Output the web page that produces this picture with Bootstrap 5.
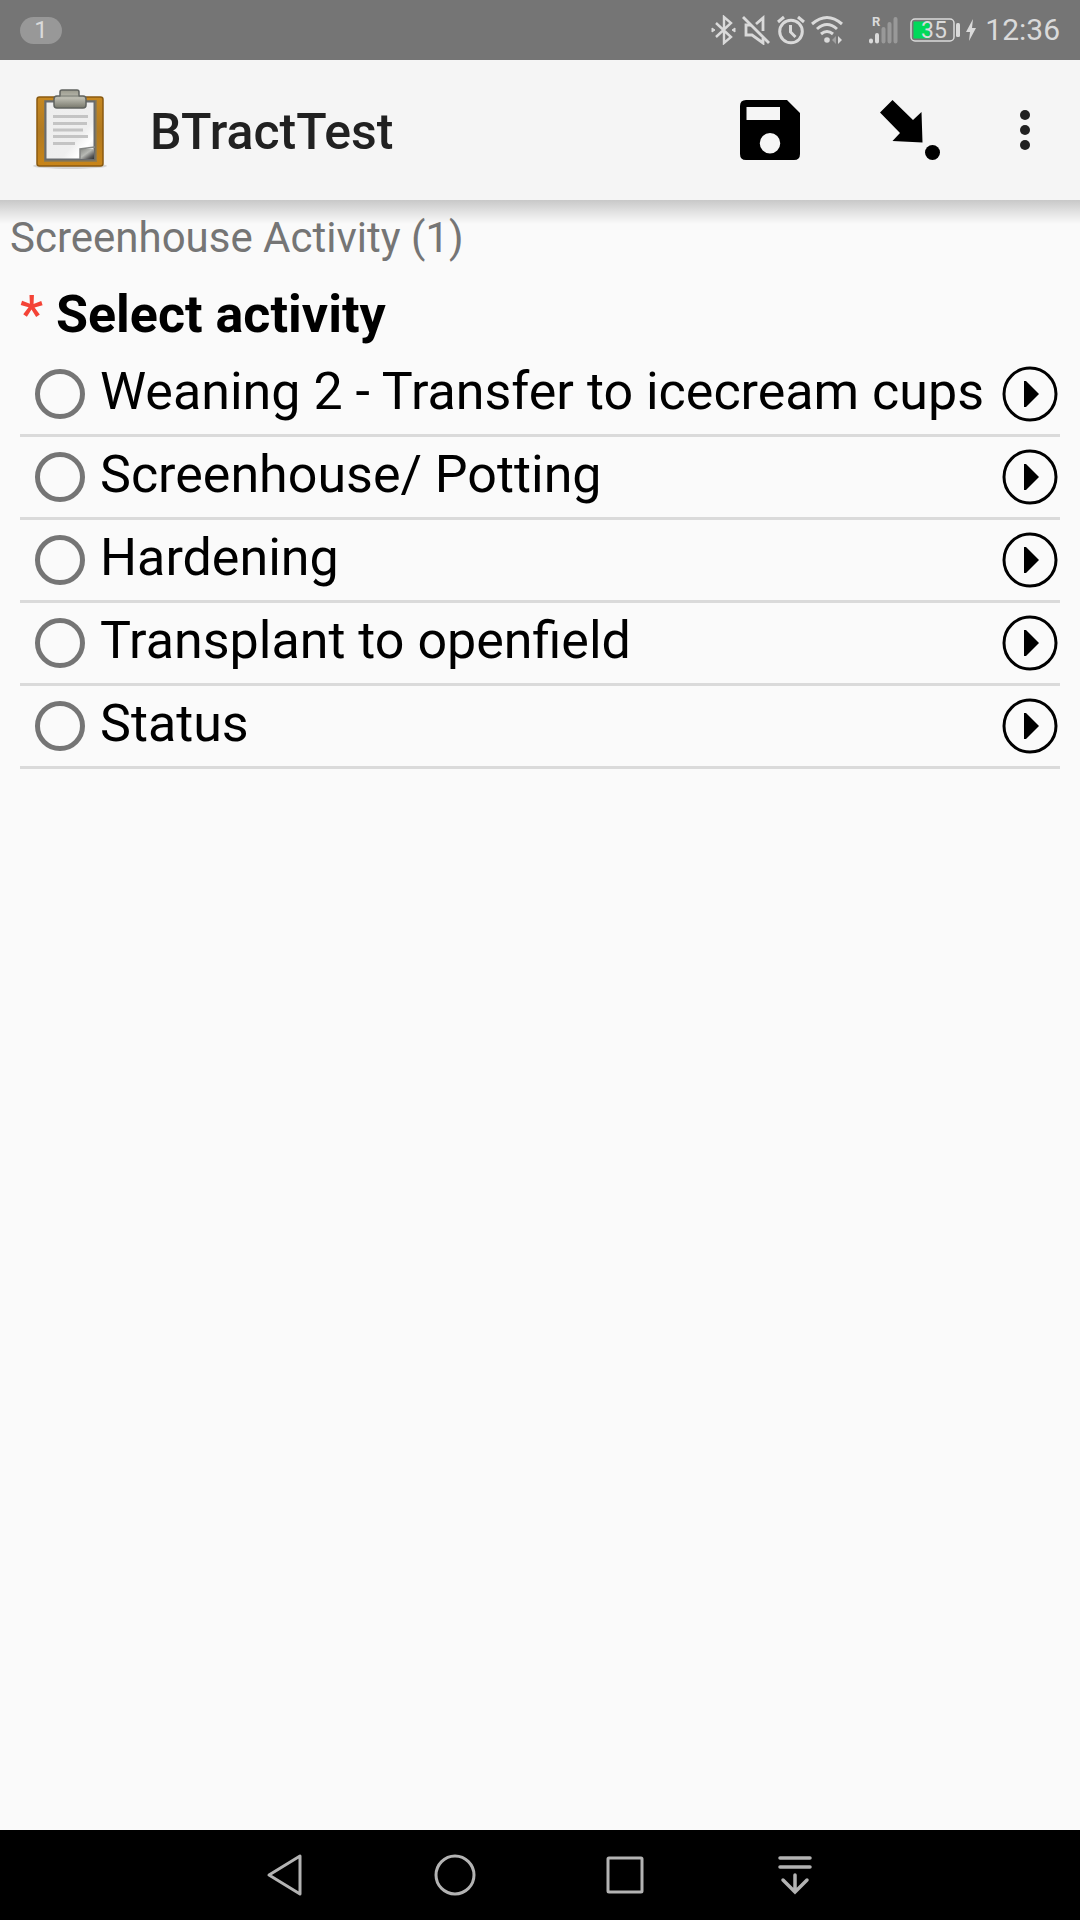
<!DOCTYPE html>
<html lang="en">
<head>
<meta charset="utf-8">
<meta name="viewport" content="width=device-width, initial-scale=1">
<title>BTractTest</title>
<link href="https://cdn.jsdelivr.net/npm/bootstrap@5.3.0/dist/css/bootstrap.min.css" rel="stylesheet">
<style>
  body { background: #fafafa; color: #000; font-family: Roboto, "Noto Sans", sans-serif; }
  svg { display: block; flex: none; }
  .status-bar { background: #757575; color: #dadada; height: 60px; padding: 0 20px; font-size: 30px; line-height: 60px; }
  .count-pill { background: #989898; width: 42px; height: 27px; font-size: 24px; line-height: 27px; }
  .app-bar { background: #f5f5f5; height: 140px; padding: 0 20px 0 30px; }
  .app-title { color: #212121; font-size: 50px; line-height: 60px; font-weight: 500; padding: 4px 0 0 40px; }
  .icon-btn { border: 0; padding: 0; background: none; color: inherit; }
  .app-actions { gap: 80px; }
  .form-area { background: linear-gradient(#c8c8c8, #e2e2e2 12px, #fafafa 24px) top / 100% 24px no-repeat; }
  .form-path { color: #757575; font-size: 42px; line-height: 50px; padding: 13px 10px 0; }
  .question { padding: 0 20px; }
  .question legend { font-size: 52px; line-height: 64px; font-weight: 700; padding-top: 20px; margin: 0 0 7px; float: none; }
  .required-mark { color: #f44336; font-weight: 500; }
  .choice { height: 83px; border-bottom: 3px solid #dadada; padding-left: 15px; }
  .choice-radio { appearance: none; flex: none; width: 50px; height: 50px; margin: 0 15px 0 0; border: 5px solid #757575; border-radius: 50%; }
  .choice-radio:checked { background: radial-gradient(#757575 45%, transparent 50%); }
  .choice-label { font-size: 52px; line-height: 60px; padding-bottom: 4px; }
  .nav-keys { background: #000; color: #b3b3b3; height: 90px; }
  .nav-keys button { width: 170px; height: 90px; }
</style>
</head>
<body class="d-flex flex-column min-vh-100">
<div class="status-bar d-flex align-items-center">
  <span class="count-pill rounded-pill text-center">1</span>
  <div class="ms-auto d-flex align-items-center">
    <svg width="28" height="30" viewBox="0 0 28 30" fill="none" stroke="currentColor" stroke-width="2.4"><path d="M6 8l15 14-7 6V2l7 6L6 22"/><path d="M2 13l3 2-3 2zM25 13l-3 2 3 2z" fill="currentColor" stroke-width="1"/></svg>
    <svg class="ms-1" width="30" height="30" viewBox="0 0 30 30" fill="none" stroke="currentColor" stroke-width="2.8"><path d="M1 2l26 26"/><path d="M14 9l7-6v13M9 10H4v10h6l11 8v-5"/></svg>
    <svg class="ms-1" width="30" height="30" viewBox="0 0 30 30" fill="none" stroke="currentColor" stroke-width="3"><circle cx="15" cy="16.500" r="11.300"/><path d="M14.500 10v7l5 5M2 7l6-5M28 7l-6-5"/></svg>
    <svg class="ms-1" width="40" height="30" viewBox="0 0 40 30" fill="none" stroke="currentColor" stroke-width="3"><path d="M2 9q15-13 30 0M7 14q10-9 20 0M11 19q6-5 12 0"/><circle cx="17" cy="25" r="2.800" fill="currentColor" stroke="none"/><path d="M28 21l4 4-4 4z" fill="currentColor" stroke="none"/><path d="M26 21l-4 4 4 4z" fill="#a0a0a0" stroke="none"/></svg>
    <svg class="ms-3" width="36" height="30" viewBox="0 0 36 30"><g fill="none" stroke-width="4" stroke-linecap="round"><path stroke="#dadada" d="M5 25.500v1M11 20v6.500"/><path stroke="#999" d="M17.500 14v12.500M23.500 9v17.500M29.500 4v22.500"/></g><text x="6" y="11" font-size="13" font-weight="700" fill="#dadada">R</text></svg>
    <svg class="ms-2" width="51" height="28" viewBox="0 0 51 28"><rect x="1" y="3" width="43" height="22" rx="4" fill="none" stroke="#dadada" stroke-width="1.500"/><rect x="3.500" y="5.500" width="16" height="17" fill="#00d95a"/><rect x="46" y="7" width="4" height="14" rx="1.500" fill="#dadada"/><text x="11" y="22" font-size="23" fill="#dadada">35</text></svg>
    <svg class="ms-1" width="12" height="24" viewBox="0 0 12 24"><path d="M8 1L1 14h4L4 23l7-13H7z" fill="currentColor"/></svg>
    <span class="ms-2">12:36</span>
  </div>
</div>

<header class="app-bar d-flex align-items-center">
  <svg width="80" height="84" viewBox="0 0 80 84" role="img" aria-label="Clipboard">
    <defs>
      <linearGradient id="wood" x2="0" y2="1"><stop stop-color="#c78820"/><stop offset=".5" stop-color="#b17a22"/><stop offset="1" stop-color="#c98518"/></linearGradient>
      <linearGradient id="sheet" x2="1" y2="1"><stop stop-color="#eee"/><stop offset=".65" stop-color="#efefef"/><stop offset=".8" stop-color="#fff"/><stop offset="1" stop-color="#ddd"/></linearGradient>
      <linearGradient id="clip" x2="0" y2="1"><stop stop-color="#99998c"/><stop offset=".45" stop-color="#bdbdb2"/><stop offset="1" stop-color="#78786c"/></linearGradient>
      <linearGradient id="curl" x2="1" y2="1"><stop stop-color="#888a85"/><stop offset=".45" stop-color="#b8bab5"/><stop offset=".8" stop-color="#555"/><stop offset="1" stop-color="#333"/></linearGradient>
    </defs>
    <ellipse cx="40" cy="78" rx="37" ry="3" fill="#000" opacity=".13"/>
    <rect x="7" y="9" width="66" height="69" rx="2.500" fill="url(#wood)" stroke="#8a5a10" stroke-width="1.500"/>
    <path d="M14 12h53v62H14z" fill="#967c48"/>
    <path d="M15.500 13.500h49v58h-49z" fill="url(#sheet)" stroke="#686b6d" stroke-width="2"/>
    <path d="M50 61h14v10H50z" fill="url(#curl)"/><path d="M50 71V61l15-2" fill="none" stroke="#858785" stroke-width="1.500"/>
    <path d="M23 28.500h35M23 35.500h34M23 42h30M23 48.500h35M23 55.500h22" stroke="#c4c4c4" stroke-width="3"/>
    <path d="M30 8V4q0-2 2-2h15q2 0 2 2v4h4q3 0 3 3v6q0 3-3 3H27q-3 0-3-3v-6q0-3 3-3z" fill="url(#clip)" stroke="#60635f" stroke-width="1.500"/>
    <path d="M31 8h17" stroke="#777a73"/>
  </svg>
  <h1 class="app-title mb-0 flex-grow-1">BTractTest</h1>
  <div class="app-actions d-flex align-items-center">
    <button type="button" class="icon-btn" aria-label="Save"><svg width="60" height="60" viewBox="0 0 60 60"><path fill-rule="evenodd" d="M6 0h41l13 13v41q0 6-6 6H6q-6 0-6-6V6q0-6 6-6zM6.500 7v13H40V7zM30 33a10 10 0 1 0 0 20.500 10 10 0 0 0 0-20.500z"/></svg></button>
    <button type="button" class="icon-btn" aria-label="Go to prompt"><svg width="60" height="60" viewBox="0 0 60 60"><path d="M12.500 0L33 20l8.500-8 1 30.500L12.500 41l7.500-8L0 12.500z"/><circle cx="52.500" cy="52.500" r="7.500"/></svg></button>
    <button type="button" class="icon-btn" aria-label="More options"><svg width="40" height="60" viewBox="0 0 40 60" fill="#212121"><circle cx="5" cy="15" r="5"/><circle cx="5" cy="30" r="5"/><circle cx="5" cy="45" r="5"/></svg></button>
  </div>
</header>

<main class="form-area flex-grow-1">
  <div class="form-path">Screenhouse Activity (1)</div>
  <form>
    <fieldset class="question">
      <legend><span class="required-mark">*</span> Select activity</legend>
      <div class="choice d-flex align-items-center"><input class="choice-radio" type="radio" name="activity" id="weaning"><label class="choice-label flex-grow-1 text-nowrap" for="weaning">Weaning 2 - Transfer to icecream cups</label><button type="button" class="icon-btn" aria-label="Choose Weaning 2"><svg width="60" height="56" viewBox="0 0 60 56"><circle cx="30" cy="28" r="26" fill="none" stroke="#000" stroke-width="3"/><path d="M24 15h2l13 13-13 13h-2z"/></svg></button></div>
      <div class="choice d-flex align-items-center"><input class="choice-radio" type="radio" name="activity" id="potting"><label class="choice-label flex-grow-1 text-nowrap" for="potting">Screenhouse/ Potting</label><button type="button" class="icon-btn" aria-label="Choose Screenhouse/ Potting"><svg width="60" height="56" viewBox="0 0 60 56"><circle cx="30" cy="28" r="26" fill="none" stroke="#000" stroke-width="3"/><path d="M24 15h2l13 13-13 13h-2z"/></svg></button></div>
      <div class="choice d-flex align-items-center"><input class="choice-radio" type="radio" name="activity" id="hardening"><label class="choice-label flex-grow-1 text-nowrap" for="hardening">Hardening</label><button type="button" class="icon-btn" aria-label="Choose Hardening"><svg width="60" height="56" viewBox="0 0 60 56"><circle cx="30" cy="28" r="26" fill="none" stroke="#000" stroke-width="3"/><path d="M24 15h2l13 13-13 13h-2z"/></svg></button></div>
      <div class="choice d-flex align-items-center"><input class="choice-radio" type="radio" name="activity" id="transplant"><label class="choice-label flex-grow-1 text-nowrap" for="transplant">Transplant to openfield</label><button type="button" class="icon-btn" aria-label="Choose Transplant to openfield"><svg width="60" height="56" viewBox="0 0 60 56"><circle cx="30" cy="28" r="26" fill="none" stroke="#000" stroke-width="3"/><path d="M24 15h2l13 13-13 13h-2z"/></svg></button></div>
      <div class="choice d-flex align-items-center"><input class="choice-radio" type="radio" name="activity" id="status"><label class="choice-label flex-grow-1 text-nowrap" for="status">Status</label><button type="button" class="icon-btn" aria-label="Choose Status"><svg width="60" height="56" viewBox="0 0 60 56"><circle cx="30" cy="28" r="26" fill="none" stroke="#000" stroke-width="3"/><path d="M24 15h2l13 13-13 13h-2z"/></svg></button></div>
    </fieldset>
  </form>
</main>

<nav class="nav-keys d-flex justify-content-center" aria-label="System navigation">
  <button type="button" class="icon-btn d-flex align-items-center justify-content-center" aria-label="Back"><svg width="44" height="44" viewBox="0 0 44 44" fill="none" stroke="currentColor" stroke-width="3" stroke-linejoin="round"><path d="M37 3v38L6 22z"/></svg></button>
  <button type="button" class="icon-btn d-flex align-items-center justify-content-center" aria-label="Home"><svg width="44" height="44" viewBox="0 0 44 44" fill="none" stroke="currentColor" stroke-width="3"><circle cx="22" cy="22" r="19"/></svg></button>
  <button type="button" class="icon-btn d-flex align-items-center justify-content-center" aria-label="Recent apps"><svg width="44" height="44" viewBox="0 0 44 44" fill="none" stroke="currentColor" stroke-width="3"><rect x="5" y="5" width="34" height="34" rx="1"/></svg></button>
  <button type="button" class="icon-btn d-flex align-items-center justify-content-center" aria-label="Notifications"><svg width="44" height="44" viewBox="0 0 44 44" fill="none" stroke="currentColor" stroke-width="3.500" stroke-linecap="round"><path d="M7 5h30M7 14h30M22 22v17M10 27l12 12 12-12"/></svg></button>
</nav>
<script src="https://cdn.jsdelivr.net/npm/bootstrap@5.3.0/dist/js/bootstrap.bundle.min.js"></script>
</body>
</html>
